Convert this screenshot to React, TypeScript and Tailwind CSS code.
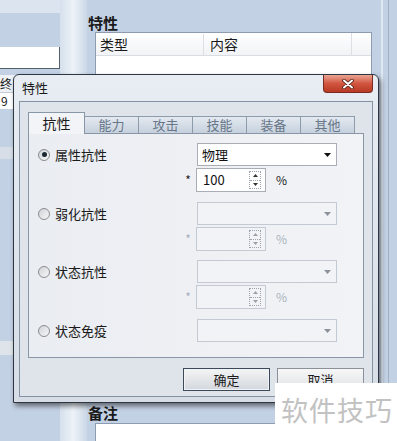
import React from "react";

const tabs = ["抗性", "能力", "攻击", "技能", "装备", "其他"];

const rows = [
  { label: "属性抗性", on: true, checked: true, value: "物理", num: "100", spin: true, mt: "mt-[10px]" },
  { label: "弱化抗性", on: false, checked: false, value: "", num: "", spin: true, mt: "mt-[10px]" },
  { label: "状态抗性", on: false, checked: false, value: "", num: "", spin: true, mt: "mt-[9px]" },
  { label: "状态免疫", on: false, checked: false, value: "", num: "", spin: false, mt: "mt-[10px]" },
];

function Radio({ checked }: { checked: boolean }) {
  return (
    <span className="flex h-[12px] w-[12px] shrink-0 items-center justify-center rounded-full border border-[#8a8c8f] bg-gradient-to-br from-[#cfd3d8] to-[#f7f7f7]">
      {checked && <span className="h-[5px] w-[5px] rounded-full bg-[#1c2630]" />}
    </span>
  );
}

function Combo({ on, value }: { on: boolean; value: string }) {
  return (
    <div
      className={
        on
          ? "ml-[17px] flex h-[23px] w-[140px] items-center justify-between border border-[#a9adb5] bg-white pl-[4px] pr-[5px]"
          : "ml-[17px] flex h-[23px] w-[140px] items-center justify-between border border-[#c4cad3] bg-[#f1f3f6] pl-[4px] pr-[5px]"
      }
    >
      <span className="text-[13px] text-[#111]">{value}</span>
      <svg width="7" height="4" viewBox="0 0 7 4">
        <path d="M0 0h7L3.5 4z" fill={on ? "#111" : "#8b929c"} />
      </svg>
    </div>
  );
}

function Spin({ on, num }: { on: boolean; num: string }) {
  const c = on ? "#333" : "#9aa1aa";
  return (
    <div className="mt-[2px] flex h-[24px] items-center">
      <span className={on ? "w-[16px] text-center text-[12px] text-[#222]" : "w-[16px] text-center text-[12px] text-[#a9b1bd]"}>*</span>
      <div
        className={
          on
            ? "flex h-[24px] w-[70px] items-center justify-between border border-[#a9adb5] bg-white pl-[6px] pr-[4px]"
            : "flex h-[24px] w-[70px] items-center justify-between border border-[#c4cad3] bg-[#f1f3f6] pl-[6px] pr-[4px]"
        }
      >
        <span className="text-[13px] text-[#111]">{num}</span>
        <div className="flex h-[18px] w-[12px] flex-col border border-dotted border-[#9aa3ae]">
          <div className="flex flex-1 items-center justify-center border-b border-dotted border-[#9aa3ae]">
            <svg width="5" height="3" viewBox="0 0 5 3"><path d="M0 3h5L2.5 0z" fill={c} /></svg>
          </div>
          <div className="flex flex-1 items-center justify-center">
            <svg width="5" height="3" viewBox="0 0 5 3"><path d="M0 0h5L2.5 3z" fill={c} /></svg>
          </div>
        </div>
      </div>
      <span className={on ? "ml-[10px] text-[12px] text-[#222]" : "ml-[10px] text-[12px] text-[#aab2bd]"}>%</span>
    </div>
  );
}

export default function App() {
  return (
    <div className="relative flex h-[441px] w-[397px] overflow-hidden bg-[#c3d1e4] font-['Noto_Sans_CJK_SC','Microsoft_YaHei',sans-serif] text-[#1a1a1a]">
      {/* left pane behind */}
      <div className="flex w-[60px] flex-col">
        <div className="h-[13px] bg-[#dce5ef]" />
        <div className="mt-[34px] h-[22px] border-b border-r border-[#56606d] bg-white" />
        <div className="mt-[6px] flex h-[18px] items-center border-b border-[#c9ced6] bg-[#eef1f5] text-[12px] leading-none">
          <span>终</span>
        </div>
        <div className="flex h-[16px] items-center bg-white pl-[1px] text-[12px] leading-none">9</div>
        <div className="mt-[38px] h-[12px] bg-[#d7dee8]" />
        <div className="mt-[182px] h-[14px] bg-[#dfe4ea]" />
      </div>
      <div className="w-[27px] bg-gradient-to-r from-[#d6e0ec] via-[#edf2f8] to-[#cbd7e6]" />

      {/* right pane behind */}
      <div className="flex flex-1 flex-col">
        <div className="flex flex-1">
          <div className="flex w-[285px] flex-col pt-[13px]">
            <div className="h-[19px] pl-[1px] text-[15px] font-bold leading-[19px]">特性</div>
            <div className="ml-[8px] flex-1 border border-[#8e9bb0] bg-white">
              <div className="flex h-[23px] items-center border-b border-[#d9dce1] bg-gradient-to-b from-white to-[#f1f3f6] text-[14px]">
                <span className="w-[108px] border-r border-[#dcdfe4] pl-[4px]">类型</span>
                <span className="flex-1 pl-[6px]">内容</span>
                <span className="h-[23px] w-[20px] border-l border-[#dcdfe4]" />
              </div>
            </div>
          </div>
          <div className="flex w-[25px] justify-center gap-[5px]">
            <div className="w-[2px] bg-[#dfe7f1]" />
            <div className="w-[1px] bg-[#9fb0c6]" />
          </div>
        </div>
        <div className="h-[22px] pl-[1px] pt-[3px] text-[15px] font-bold leading-[18px]">备注</div>
        <div className="ml-[8px] h-[18px] border-l border-t border-[#8e9bb0] bg-white" />
      </div>

      {/* dialog */}
      <div className="absolute left-[13px] top-[74px] flex h-[329px] w-[366px] flex-col rounded-t-[6px] border border-[#2e3641] bg-gradient-to-b from-[#e8edf3] to-[#d6dde6] shadow-[2px_3px_5px_rgba(0,0,0,0.5)]">
        <div className="relative h-[26px] pl-[8px] pt-[5px] text-[13px] leading-[16px]">
          特性
          <div className="absolute right-[5px] top-0 flex h-[18px] w-[50px] items-center justify-center rounded-b-[4px] border border-t-0 border-[#7a2a22] bg-gradient-to-b from-[#e8a393] via-[#d2553f] to-[#b83a26]">
            <svg width="12" height="10" viewBox="0 0 12 10">
              <path d="M2 1.5L10 8.5M10 1.5L2 8.5" stroke="#4a1a12" strokeWidth="3.6" strokeLinecap="round" />
              <path d="M2 1.5L10 8.5M10 1.5L2 8.5" stroke="#fff" strokeWidth="2" strokeLinecap="round" />
            </svg>
          </div>
        </div>
        <div className="mx-[5px] mb-[5px] flex flex-1 flex-col border border-[#8592a3] bg-[#dfe3ea] px-[8px] pt-[10px]">
          <div className="flex h-[21px] items-end">
            {tabs.map((t, i) =>
              i === 0 ? (
                <div
                  key={t}
                  className="relative z-10 -mb-px flex h-[22px] w-[57px] items-center justify-center border border-b-0 border-[#8996a6] bg-[#f3f4f7] text-[14px]"
                >
                  {t}
                </div>
              ) : (
                <div
                  key={t}
                  className="-ml-px flex h-[17px] w-[55px] items-center justify-center border border-b-0 border-[#8d9bab] bg-gradient-to-b from-[#e3e9f0] to-[#c6d1dd] text-[13px] text-[#677688]"
                >
                  {t}
                </div>
              )
            )}
          </div>
          <div className="flex h-[225px] flex-col border border-[#8996a6] bg-gradient-to-r from-[#eaedf2] to-[#f2f3f6] pl-[9px]">
            {rows.map((r, i) => (
              <div key={r.label} className={`flex ${i === 0 ? "mt-[9px]" : r.mt}`}>
                <div className="flex h-[23px] w-[142px] items-center gap-[5px]">
                  <Radio checked={r.checked} />
                  <span className="text-[13px]">{r.label}</span>
                </div>
                <div className="flex flex-col">
                  <Combo on={r.on} value={r.value} />
                  {r.spin && <Spin on={r.on} num={r.num} />}
                </div>
              </div>
            ))}
          </div>
          <div className="mt-[10px] flex justify-end gap-[7px]">
            <div className="flex h-[23px] w-[87px] items-center justify-center border border-[#3d4858] bg-gradient-to-b from-[#f4f4f4] to-[#d3d7dd] text-[13px] shadow-[inset_0_0_0_1px_#eef3f8]">
              确定
            </div>
            <div className="flex h-[23px] w-[87px] items-center justify-center border border-[#8b9099] bg-gradient-to-b from-[#f7f7f7] to-[#dfe2e6] text-[13px]">
              取消
            </div>
          </div>
        </div>
      </div>

      {/* watermark */}
      <div className="absolute left-[275px] top-[383px] flex h-[58px] w-[122px] items-start bg-white pl-[6px] pt-[12px]">
        <span className="text-[27px] leading-[30px] tracking-[1px] text-[#c2c2c2]">软件技巧</span>
      </div>
    </div>
  );
}
